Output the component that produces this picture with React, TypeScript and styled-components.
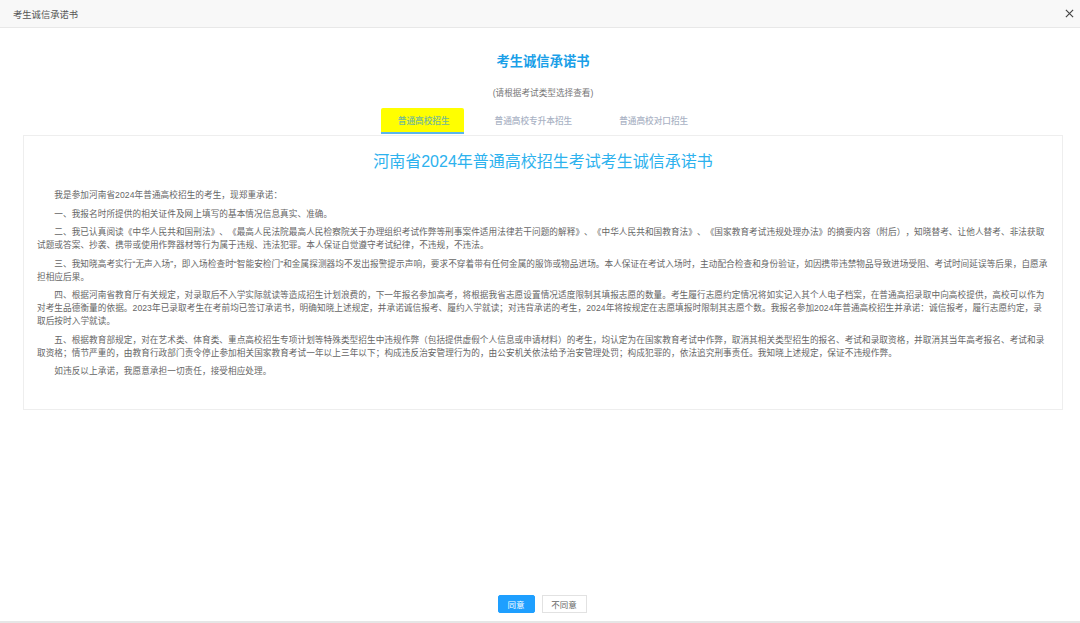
import React, { useState } from "react";
import styled, { createGlobalStyle } from "styled-components";

const paragraphs = [
    "我是参加河南省2024年普通高校招生的考生，现郑重承诺：",
    "一、我报名时所提供的相关证件及网上填写的基本情况信息真实、准确。",
    "二、我已认真阅读《中华人民共和国刑法》、《最高人民法院最高人民检察院关于办理组织考试作弊等刑事案件适用法律若干问题的解释》、《中华人民共和国教育法》、《国家教育考试违规处理办法》的摘要内容（附后），知晓替考、让他人替考、非法获取试题或答案、抄袭、携带或使用作弊器材等行为属于违规、违法犯罪。本人保证自觉遵守考试纪律，不违规，不违法。",
    "三、我知晓高考实行“无声入场”，即入场检查时“智能安检门”和金属探测器均不发出报警提示声响，要求不穿着带有任何金属的服饰或物品进场。本人保证在考试入场时，主动配合检查和身份验证，如因携带违禁物品导致进场受阻、考试时间延误等后果，自愿承担相应后果。",
    "四、根据河南省教育厅有关规定，对录取后不入学实际就读等造成招生计划浪费的，下一年报名参加高考，将根据我省志愿设置情况适度限制其填报志愿的数量。考生履行志愿约定情况将如实记入其个人电子档案，在普通高招录取中向高校提供，高校可以作为对考生品德衡量的依据。2023年已录取考生在考前均已签订承诺书，明确知晓上述规定，并承诺诚信报考、履约入学就读；对违背承诺的考生，2024年将按规定在志愿填报时限制其志愿个数。我报名参加2024年普通高校招生并承诺：诚信报考，履行志愿约定，录取后按时入学就读。",
    "五、根据教育部规定，对在艺术类、体育类、重点高校招生专项计划等特殊类型招生中违规作弊（包括提供虚假个人信息或申请材料）的考生，均认定为在国家教育考试中作弊，取消其相关类型招生的报名、考试和录取资格，并取消其当年高考报名、考试和录取资格；情节严重的，由教育行政部门责令停止参加相关国家教育考试一年以上三年以下；构成违反治安管理行为的，由公安机关依法给予治安管理处罚；构成犯罪的，依法追究刑事责任。我知晓上述规定，保证不违规作弊。",
    "如违反以上承诺，我愿意承担一切责任，接受相应处理。",
];

const tabs = ["普通高校招生", "普通高校专升本招生", "普通高校对口招生"];

export default function App() {
    const [activeTab, setActiveTab] = useState(0);

    return (
        <Wrapper>
            <GlobalStyle />
            <Header>
                <HeaderTitle>考生诚信承诺书</HeaderTitle>
                <CloseIcon viewBox="0 0 10 10" aria-label="关闭">
                    <path d="M1 1 L9 9 M9 1 L1 9" />
                </CloseIcon>
            </Header>
            <Content>
                <Heading>考生诚信承诺书</Heading>
                <SubHeading>(请根据考试类型选择查看)</SubHeading>
                <Tabs>
                    {tabs.map((tab, index) => (
                        <Tab key={tab} $active={index === activeTab} onClick={() => setActiveTab(index)}>
                            {tab}
                        </Tab>
                    ))}
                </Tabs>
                <Panel>
                    <PanelTitle>河南省2024年普通高校招生考试考生诚信承诺书</PanelTitle>
                    {paragraphs.map((text) => (
                        <Paragraph key={text}>{text}</Paragraph>
                    ))}
                </Panel>
            </Content>
            <Footer>
                <PrimaryButton>同意</PrimaryButton>
                <PlainButton>不同意</PlainButton>
            </Footer>
        </Wrapper>
    );
}

const GlobalStyle = createGlobalStyle`
    html, body {
        margin: 0;
        padding: 0;
        background: #fff;
        font-family: "Liberation Sans", "Noto Sans CJK SC", sans-serif;
        text-spacing-trim: space-all;
    }
`;

const Wrapper = styled.div`
    height: 623px;
    box-sizing: border-box;
    display: flex;
    flex-direction: column;
    overflow: hidden;
    border-bottom: 2px solid #e6e6e6;
`;

const Header = styled.div`
    height: 28px;
    box-sizing: border-box;
    flex: none;
    display: flex;
    align-items: center;
    justify-content: space-between;
    padding: 0 6px 0 13px;
    background: #f8f8f8;
    border-bottom: 1px solid #e8e8e8;
`;

const HeaderTitle = styled.div`
    font-size: 9.3px;
    color: #555;
`;

const CloseIcon = styled.svg`
    width: 9px;
    height: 9px;
    fill: none;
    stroke: #444;
    stroke-width: 1.3;
`;

const Content = styled.div`
    flex: 1;
    display: flex;
    flex-direction: column;
    align-items: stretch;
    padding: 0 17px 0 23px;
`;

const Heading = styled.h1`
    margin: 25px 0 0;
    font-size: 13.3px;
    line-height: 18px;
    font-weight: 700;
    text-align: center;
    color: #1a9fe8;
`;

const SubHeading = styled.div`
    margin-top: 16px;
    font-size: 8.65px;
    line-height: 12px;
    text-align: center;
    color: #777;
`;

const Tabs = styled.div`
    margin-top: 9px;
    height: 27px;
    display: flex;
    justify-content: center;
    gap: 14px;
    padding-right: 3px;
    border-bottom: 1px solid #eee;
`;

const Tab = styled.div<{ $active: boolean }>`
    height: 26px;
    box-sizing: border-box;
    padding: 0 14px 0 17px;
    display: flex;
    align-items: center;
    font-size: 8.65px;
    font-weight: 500;
    cursor: pointer;
    color: ${(p) => (p.$active ? "#72b79a" : "#a9b2c4")};
    background: ${(p) => (p.$active ? "#ffff00" : "transparent")};
    border-radius: 2px 2px 0 0;
    border-bottom: 2px solid ${(p) => (p.$active ? "#5cb6ee" : "transparent")};

    &:last-child {
        margin-left: 2px;
    }
`;

const Panel = styled.div`
    height: 274px;
    box-sizing: border-box;
    padding: 0 13px;
    border: 1px solid #eee;
    border-top: none;
`;

const PanelTitle = styled.div`
    margin: 16px 0 17px;
    font-size: 16px;
    line-height: 20px;
    text-align: center;
    color: #2db2ee;
`;

const Paragraph = styled.p`
    margin: 0 0 5.5px;
    font-size: 8.65px;
    letter-spacing: 0.06px;
    line-height: 13px;
    text-indent: 2em;
    color: #666;
`;

const Footer = styled.div`
    flex: none;
    height: 26px;
    display: flex;
    justify-content: center;
    align-items: flex-start;
    gap: 7px;
    padding-left: 4px;
`;

const BaseButton = styled.button`
    height: 18px;
    box-sizing: border-box;
    padding: 0;
    font-family: inherit;
    font-size: 8.5px;
    cursor: pointer;
`;

const PrimaryButton = styled(BaseButton)`
    width: 37px;
    color: #fff;
    background: #1e9fff;
    border: 1px solid #1e9fff;
    border-radius: 2px;
`;

const PlainButton = styled(BaseButton)`
    width: 45px;
    color: #666;
    background: #fff;
    border: 1px solid #e2e2e2;
`;
